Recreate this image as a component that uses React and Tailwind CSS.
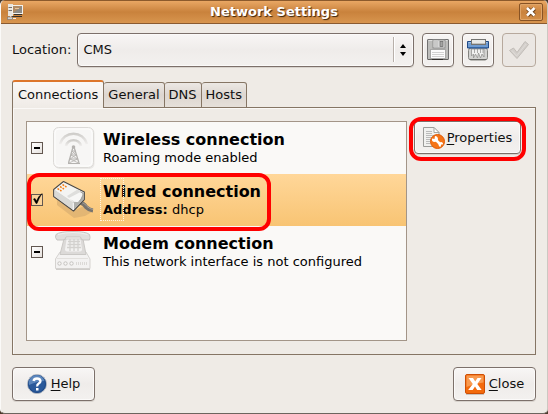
import { useState } from "react";

const buttonStyle =
  "flex items-center justify-center rounded-[4px] border border-[#7c706a] bg-linear-to-b from-[#f8f6f5] via-[#efecea] via-50% to-[#f3f1ef] shadow-[inset_0_0_0_1px_#fbfaf9,0_1px_0_#d8d3cd]";

function WindowIcon() {
  return (
    <svg width="16" height="16" viewBox="0 0 16 16" className="shrink-0">
      <rect x="1" y="0" width="5" height="12" fill="#e9e5df" />
      <path d="M1.500 3.500h4M1.500 6.500h4" stroke="#77716b" />
      <rect x="5.500" y="1.500" width="10" height="8" fill="#b08a64" stroke="#f2f0ec" />
      <path d="M6 9l9-7v7z" fill="#8c8a86" />
      <path d="M8 4.500h4" stroke="#e6c49c" />
      <path d="M7 10.500h8M5 12.500h10" stroke="#35302b" />
      <path d="M3.500 11v2M9 14.500H6" fill="none" stroke="#eeeeec" />
      <rect x="0.500" y="13" width="5" height="2.500" fill="#d5d2ce" stroke="#77716b" strokeWidth="0.600" />
    </svg>
  );
}

function FloppyIcon() {
  return (
    <svg width="22" height="22" viewBox="0 0 22 22">
      <rect x="0.500" y="0.500" width="21" height="20" rx="0.500" fill="#bdbdbb" stroke="#727272" />
      <path d="M1.500 1.500h19" stroke="#dededd" />
      <rect x="6" y="1" width="12" height="8" fill="#e6e6e5" stroke="#8d8d8c" />
      <path d="M6.500 1h5v7h-5z" fill="#c9c9c8" />
      <rect x="13" y="2.500" width="3" height="5" fill="#a4a4a3" stroke="#6e6e6d" strokeWidth="0.800" />
      <rect x="3.500" y="10.500" width="15" height="9" fill="#fcfcfc" stroke="#a8a8a7" />
      <path d="M5 13.500h12M5 15.500h12M5 17.500h12" stroke="#d2d2d2" />
      <path d="M1 20.500h20" stroke="#62625f" />
      <path d="M5 20.500h11" stroke="#332f2d" />
    </svg>
  );
}

function ShredderIcon() {
  return (
    <svg width="22" height="22" viewBox="0 0 22 22">
      <rect x="1.500" y="9" width="19" height="12" rx="2.500" fill="#d3d3d1" stroke="#83837f" />
      <path d="M3 20.500h16" stroke="#696966" />
      <path d="M4.500 10v7l2-2v4l2-4 2 4 1-5 2 5 1.500-4 2 3v-8z" fill="#f1f1f0" stroke="#969693" strokeWidth="0.800" />
      <path d="M7.500 10v4M10.500 10v4M13.500 10v4M16 10v4" stroke="#8d8d8a" strokeWidth="0.700" />
      <path d="M0.500 2.500h21v6.500h-21z" fill="#6f9bd1" stroke="#204a87" />
      <path d="M1.500 3.500h19" stroke="#a4c4e8" />
      <path d="M1 8.500h20" stroke="#3465a4" />
      <rect x="4.500" y="0.500" width="14" height="5" fill="#e9e9e7" stroke="#747471" />
      <path d="M5 4.500h13" stroke="#c1c1bf" />
    </svg>
  );
}

function ApplyIcon() {
  return (
    <svg width="22" height="20" viewBox="0 0 22 20">
      <path
        d="M1.500 10.500l4-2.500 3.500 4.500L17 1.500l3.500 3L9 18.500z"
        fill="#d3cfcb"
        stroke="#c1bcb7"
        strokeLinejoin="round"
      />
      <path d="M4 10.500l4.500 5.500L18 4" fill="none" stroke="#dfdbd7" />
    </svg>
  );
}

function WirelessIcon() {
  return (
    <svg width="42" height="44" viewBox="0 0 42 44">
      <rect x="1.500" y="2" width="40" height="41" rx="5" fill="#eae8e6" />
      <rect x="0.500" y="1.500" width="40" height="40" rx="5" fill="#f7f6f5" stroke="#dcdad7" />
      <rect x="2" y="3" width="37" height="37" rx="4" fill="none" stroke="#fdfdfc" />
      <defs>
        <linearGradient id="waves" x1="0" y1="0" x2="0" y2="1">
          <stop offset="0" stopColor="#cfcdca" />
          <stop offset="1" stopColor="#f0eeed" />
        </linearGradient>
      </defs>
      <g fill="none" stroke="url(#waves)" strokeWidth="2.500">
        <path d="M7 18a14 14 0 0 1 27 0" />
        <path d="M13 20a7.800 7.800 0 0 1 15 0" />
      </g>
      <circle cx="20.500" cy="21" r="1.800" fill="#b5b3b0" />
      <g fill="none" stroke="#b5b3b0" strokeWidth="1">
        <path d="M20 21L15.500 37M21 21L26 37" strokeWidth="1.300" />
        <path d="M19 25h3.500M18 29h5M17 33h7.500M15 37.500h12" />
        <path d="M19 25l4 4-6 4 8.500 4M22.500 25l-4.500 4 6.500 4-8.500 4" strokeWidth="0.800" />
      </g>
    </svg>
  );
}

function WiredIcon() {
  return (
    <svg width="42" height="42" viewBox="0 0 42 42">
      <path d="M4 21v5l17 13 11-2 7-4-8-6-11 5z" fill="#d9ae70" opacity="0.700" />
      <path d="M27 23.500q4 1 6 4.500 3 3 7 3.500" fill="none" stroke="#77736d" strokeWidth="4" />
      <path d="M29 23.500q3 1 5 4 3 2.500 6 3" fill="none" stroke="#a19d97" strokeWidth="1" />
      <path
        d="M0.700 10.500L10.500 2.500 31.300 13v7.500L20.500 32 0.700 17.500z"
        fill="#d6d6d3"
        stroke="#4d4b49"
        strokeWidth="1.200"
        strokeLinejoin="round"
      />
      <path d="M1.500 10.800L10.500 3.500 30.500 13.500 20.300 23.500z" fill="#f4f4f2" />
      <path d="M1.300 11l19 13v7L1.300 17.300z" fill="#d9d9d6" />
      <path d="M20.300 24l10.400-9.500v6L20.300 31z" fill="#b0b0ac" />
      <path d="M14 17L24.500 10.500l6 3-10 10z" fill="#dededc" />
      <path d="M15 19.500L27.500 13q3 0 2.500 3-2 5-4 6.500-4 1.500-6-1z" fill="#f7f7f6" />
      <path d="M27.500 13q3 0 2.500 3-2 5-4 6.500" fill="none" stroke="#9d9d99" />
      <path d="M20.300 24v7" stroke="#fff" />
      <path d="M4.500 9.500l4 2.500M7 7.500l4 2.500M9.500 5.500l4 2.500" stroke="#f5831a" strokeWidth="1.500" strokeDasharray="2 1" />
    </svg>
  );
}

function ModemIcon() {
  return (
    <svg width="42" height="42" viewBox="0 0 42 42">
      <path d="M7 21l-4.500 7v9.500h34.500V28L33 21z" fill="#f3f2f1" stroke="#d5d3d0" />
      <path d="M3 38.500h34" stroke="#cfcdca" />
      <path d="M11 8L7 23.500h26L30 8z" fill="#dcdad8" stroke="#cac8c5" />
      <path d="M13.500 8.500L12 18.500q0 2 2 2h13q2 0 2-2L27.500 8.500z" fill="#f3f2f1" />
      <path d="M15 10.500h12M14.500 13.500h13M14 16.500h14M17 8v12M21 8v12M25 8v12" stroke="#d3d1ce" strokeWidth="1.300" />
      <path
        d="M3 3.500q4-3 17-3t16.500 3q1 3 0 5.500h-6.500q-2 0-2.500-3H13q-.5 3-3 3H4Q1.500 6.500 3 3.500z"
        fill="#e0dedc"
        stroke="#c6c4c1"
      />
      <path d="M5 3.500q7-2 15-2t14.500 2" fill="none" stroke="#f0efed" />
      <path d="M4 27.500h31" stroke="#e2e0dd" />
      <g fill="#f8f7f6" stroke="#c4c2bf">
        <circle cx="6.500" cy="32.500" r="1.700" />
        <circle cx="12.500" cy="32.500" r="1.700" />
        <circle cx="18.500" cy="32.500" r="1.700" />
      </g>
      <path d="M23.500 31v3M25.500 31v3M27.500 31v3M29.500 31v3M31.500 31v3M33.500 31v3" stroke="#dbd9d6" />
    </svg>
  );
}

function PropertiesIcon() {
  return (
    <svg width="22" height="22" viewBox="0 0 22 22">
      <path d="M0.500 0.500h10.500l5 5v14h-15.500z" fill="#f1f1ef" stroke="#9b9b98" />
      <path d="M11 0.500v5h5z" fill="#fff" stroke="#a7a7a4" />
      <path d="M3 4.500h6M3 6.500h6M3 8.500h10M3 10.500h8M3 12.500h5M3 14.500h4M3 16.500h4" stroke="#bababa" />
      <circle cx="14.500" cy="14.500" r="7" fill="#f57418" stroke="#e05a05" />
      <path d="M12 12l6 6" stroke="#fff" strokeWidth="2.500" />
      <path d="M9 11.500l2.500 0.500 0.500-3q3 0 3 3.500l-1 2-3 .5q-2.500-.5-2-3.500z" fill="#fff" />
      <path d="M20 17.500l-2-.5-.5 3q-2-.5-2-2.500l1-2 2-.5q2 .5 1.500 2.500z" fill="#fff" />
    </svg>
  );
}

function HelpIcon() {
  return (
    <svg width="20" height="20" viewBox="0 0 20 20">
      <circle cx="10" cy="10" r="9.500" fill="#2f5e9e" stroke="#b2b7bf" />
      <circle cx="10" cy="10" r="8.500" fill="#2b5a9b" stroke="#204a87" />
      <path d="M2 11a8 8 0 0 1 15.500-4Q11 7 2 11z" fill="#5c86bc" />
      <path d="M6.500 7q.5-2.500 3.500-2.500T13.500 7q0 1.500-1.800 2.600T10.300 12.500" fill="none" stroke="#fff" strokeWidth="2.300" />
      <rect x="9" y="14" width="2.500" height="2.500" fill="#fff" />
    </svg>
  );
}

function CloseIcon() {
  return (
    <svg width="20" height="21" viewBox="0 0 20 21">
      <path d="M1 20.500h18" stroke="#c9c4bf" />
      <rect x="0.500" y="0.500" width="19" height="19" rx="1.500" fill="#f36a0c" stroke="#ce4e04" />
      <path d="M1.500 1.500h17v7Q10 9 1.500 13z" fill="#f89a50" />
      <path d="M3.500 4h4.500l2.200 3.500L12.500 4h4l-4.200 6 4.400 6h-4.500L10 12.600 7.700 16h-4.500l4.600-6z" fill="#fff" />
    </svg>
  );
}

const connections = [
  { id: "wireless", name: "Wireless connection", info: "Roaming mode enabled", icon: <WirelessIcon /> },
  { id: "wired", name: "Wired connection", label: "Address:", info: "dhcp", icon: <WiredIcon /> },
  { id: "modem", name: "Modem connection", info: "This network interface is not configured", icon: <ModemIcon /> },
];

function ConnectionRow({ item, selected, checked, onSelect, onToggle }) {
  return (
    <li
      onClick={onSelect}
      className={`relative flex h-[52px] items-center pl-1 ${selected ? "bg-linear-to-b from-[#ffd799] to-[#f8c473]" : ""}`}
    >
      <span className="relative size-3">
        <input
          id={item.id}
          type="checkbox"
          checked={checked}
          onChange={onToggle}
          className={`block size-3 appearance-none border border-[#625750] ${selected ? "bg-[#fbd499]" : "bg-linear-to-br from-white to-[#e6e2de]"}`}
        />
        <svg width="14" height="14" viewBox="0 0 14 14" className="pointer-events-none absolute -top-0.5 left-0">
          {checked ? (
            <path d="M2.500 7l1.500-.5 1.500 2.500Q7.500 4 11 1.500 8 6 6 11.500H5z" fill="#000" stroke="#000" strokeWidth="0.500" />
          ) : (
            <path d="M3 8h6" stroke="#000" strokeWidth="2" />
          )}
        </svg>
      </span>
      <span className="ml-2.5 w-[42px]">{item.icon}</span>
      <label htmlFor={item.id} className="ml-2 pt-0.5 leading-[18px] whitespace-nowrap">
        <span className="block text-[16px] font-bold">{item.name}</span>
        <span className="block">
          {item.label && <b>{item.label} </b>}
          {item.info}
        </span>
      </label>
      {selected && (
        <>
          <span className="pointer-events-none absolute top-1 left-[73px] h-[43px] w-6 border border-dotted border-[#fff4e0]" />
          <span className="pointer-events-none absolute -top-px left-0 h-[58px] w-[244px] rounded-[12px] border-4 border-[#ff0000]" />
        </>
      )}
    </li>
  );
}

const tabs = ["Connections", "General", "DNS", "Hosts"];

export default function App() {
  const [tab, setTab] = useState("Connections");
  const [selected, setSelected] = useState("wired");
  const [enabled, setEnabled] = useState({ wired: true });

  return (
    <div className="min-h-screen bg-[#4b3a2b] font-['DejaVu_Sans',sans-serif] text-[13px] text-[#101010]">
      <div className="flex min-h-screen flex-col overflow-hidden rounded-[5px] border-r border-b border-l border-r-[#cdc7c1] border-b-[#6c645e] border-l-[#fbfaf8] bg-[#efebe6]">
        {/* title bar */}
        <header className="flex h-6 items-center border-t border-b border-t-[#8c5a2c] border-b-[#8a5a30] bg-linear-to-b from-[#e9a764] via-[#c9823c] via-50% to-[#d8954e] pr-1 pl-1.5">
          <WindowIcon />
          <h1 className="flex-1 pl-1.5 text-center font-bold text-white [text-shadow:1px_1px_1px_#3a220c]">Network Settings</h1>
          <button
            aria-label="Close window"
            className="flex h-[18px] w-6 items-center justify-center rounded-[2px] border border-[#885324] shadow-[inset_0_0_0_1px_#e0a568]"
          >
            <svg width="12" height="12" viewBox="0 0 12 12">
              <path d="M2.500 2.500l7 7M9.500 2.500l-7 7" stroke="#653b15" strokeWidth="4" />
              <path d="M2 2l7.500 7.500M9.500 2L2 9.500" stroke="#fff" strokeWidth="2.500" />
            </svg>
          </button>
        </header>

        <main className="flex flex-1 flex-col px-[11px] pt-[9px] pb-3">
          <div className="flex items-center">
            <label htmlFor="location">Location:</label>
            <div className="relative ml-1.5 flex-1">
              <select
                id="location"
                className="block h-[34px] w-full appearance-none rounded-[4px] border border-[#7c706a] bg-linear-to-b from-[#f8f6f5] via-[#efecea] via-50% to-[#f3f1ef] pl-[5px] shadow-[inset_0_0_0_1px_#fbfaf9,0_1px_0_#d8d3cd]"
              >
                <option>CMS</option>
              </select>
              <svg width="24" height="26" viewBox="0 0 24 26" className="pointer-events-none absolute top-1 right-0">
                <path d="M3.500 0v25" stroke="#b8b0aa" />
                <path d="M4.500 0v25" stroke="#fff" />
                <path d="M10 11l3-4 3 4zM10 15h6l-3 4z" fill="#000" />
              </svg>
            </div>
            <button aria-label="Save location" className={`ml-2 h-[34px] w-8 ${buttonStyle}`}>
              <FloppyIcon />
            </button>
            <button aria-label="Delete location" className={`ml-2 h-[34px] w-8 ${buttonStyle}`}>
              <ShredderIcon />
            </button>
            <button
              disabled
              aria-label="Apply"
              className="ml-2 flex h-[34px] w-[34px] items-center justify-center rounded-[4px] border border-[#b7a99d] bg-[#ebe7e3]"
            >
              <ApplyIcon />
            </button>
          </div>

          <div role="tablist" className="relative z-10 mt-[13px] flex items-end">
            {tabs.map((name) => (
              <button
                key={name}
                role="tab"
                aria-selected={tab === name}
                onClick={() => setTab(name)}
                className={
                  tab === name
                    ? "h-7 rounded-t-[3px] border border-t-2 border-b-0 border-[#857564] border-t-[#dd762c] bg-linear-to-b from-[#faf8f6] to-[#efebe6] px-[5px]"
                    : "h-[26px] rounded-t-[3px] border border-l-0 border-[#857564] bg-linear-to-b from-[#ece8e4] via-[#ddd6d0] via-50% to-[#e6e0da] px-1"
                }
              >
                {name}
              </button>
            ))}
          </div>

          <section
            role="tabpanel"
            className="-mt-px flex flex-1 items-start border border-[#857564] p-[13px] pr-3.5 shadow-[inset_1px_1px_0_#faf8f6]"
          >
            <ul className="flex-1 self-stretch border border-[#a39588] bg-[#faf9f7] text-black">
              {connections.map((item) => (
                <ConnectionRow
                  key={item.id}
                  item={item}
                  selected={selected === item.id}
                  checked={!!enabled[item.id]}
                  onSelect={() => setSelected(item.id)}
                  onToggle={() => setEnabled({ ...enabled, [item.id]: !enabled[item.id] })}
                />
              ))}
            </ul>
            <div className="relative ml-[7px]">
              <button className={`h-[33px] w-[107px] gap-0.5 ${buttonStyle}`}>
                <PropertiesIcon />
                <span>
                  <u className="underline-offset-2">P</u>roperties
                </span>
              </button>
              <span className="pointer-events-none absolute -inset-x-[5px] -top-1 h-11 rounded-[12px] border-4 border-[#ff0000]" />
            </div>
          </section>

          <footer className="mt-3 flex justify-between">
            <button className={`h-[34px] w-[83px] gap-1 ${buttonStyle}`}>
              <HelpIcon />
              <span>
                <u className="underline-offset-2">H</u>elp
              </span>
            </button>
            <button className={`h-[34px] w-[83px] gap-1 ${buttonStyle}`}>
              <CloseIcon />
              <span>
                <u className="underline-offset-2">C</u>lose
              </span>
            </button>
          </footer>
        </main>
      </div>
    </div>
  );
}
